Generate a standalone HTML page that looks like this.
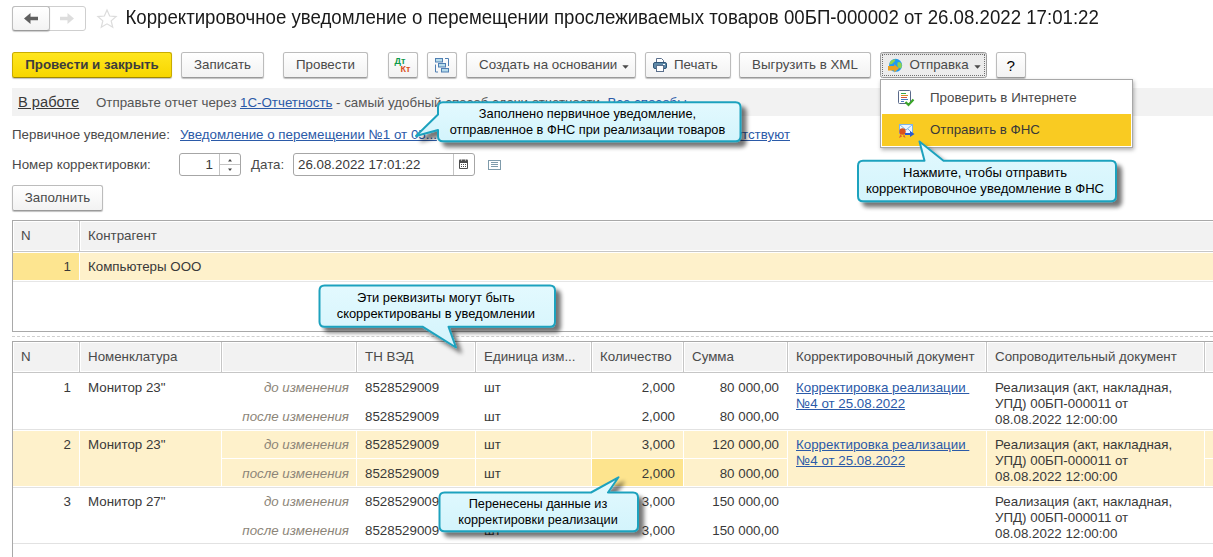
<!DOCTYPE html>
<html lang="ru">
<head>
<meta charset="utf-8">
<title>Корректировочное уведомление</title>
<style>
html,body{margin:0;padding:0;}
body{width:1213px;height:557px;position:relative;overflow:hidden;background:#fff;font-family:"Liberation Sans",Arial,sans-serif;font-size:13.33px;color:#4a4a4a;}
.abs{position:absolute;}
.btn{position:absolute;top:52px;height:24px;box-sizing:content-box;border:1px solid #bcbcbc;border-bottom-color:#9a9a9a;border-radius:2.500px;background:linear-gradient(#ffffff,#f2f2f2);box-shadow:0 1px 1px rgba(0,0,0,.25);text-align:center;line-height:23px;color:#4a4a4a;white-space:nowrap;}
.btn.y{background:linear-gradient(#ffe61e,#f7d600);border-color:#c9ac00;border-bottom-color:#a08800;font-weight:bold;color:#3c3c3c;}
.lnk{color:#2b5aa8;text-decoration:underline;}
.t{position:absolute;white-space:nowrap;line-height:16px;}
.r{text-align:right;}
.it{font-style:italic;color:#8c8578;}
.hl{position:absolute;background:#e0e0e0;height:1px;}
.vl{position:absolute;background:#d4d4d4;width:1px;}
.co{position:absolute;font-size:12.9px;line-height:16.3px;color:#000;text-align:center;white-space:nowrap;}
</style>
</head>
<body>

<!-- title -->
<div class="abs" style="left:12px;top:6px;width:72px;height:23px;border:1px solid #cfcfcf;border-radius:3px;background:#fff;"></div>
<div class="abs" style="left:12px;top:6px;width:36px;height:23px;border:1px solid #bdbdbd;border-bottom-color:#9a9a9a;border-radius:3px;background:linear-gradient(#fff,#f3f3f3);box-shadow:0 1px 1px rgba(0,0,0,.2);"></div>
<svg class="abs" style="left:12px;top:6px" width="74" height="25" viewBox="0 0 74 25">
<path d="M12 12.500L18.500 7L18.500 10.800L26 10.800L26 14.200L18.500 14.200L18.500 18Z" fill="#5f5f5f"/>
<path d="M62 12.500L55.500 7L55.500 10.800L48 10.800L48 14.200L55.500 14.200L55.500 18Z" fill="#dddddd"/>
</svg>
<svg class="abs" style="left:96px;top:7.500px" width="22" height="22" viewBox="0 0 20 20"><path d="M10 1.800L12.400 7.300L18.300 7.800L13.800 11.700L15.200 17.500L10 14.400L4.800 17.500L6.200 11.700L1.700 7.800L7.600 7.300Z" fill="none" stroke="#dcdcdc" stroke-width="1.100"/></svg>
<div class="t" id="title" style="left:125.400px;top:6px;font-size:18.67px;line-height:24px;color:#1a1a1a;transform:scaleY(1.045);transform-origin:0 18px;">Корректировочное уведомление о перемещении прослеживаемых товаров 00БП-000002 от 26.08.2022 17:01:22</div>

<!-- toolbar -->
<div class="btn y" style="left:12px;width:158px;">Провести и закрыть</div>
<div class="btn" style="left:181px;width:81px;">Записать</div>
<div class="btn" style="left:283px;width:83px;">Провести</div>
<div class="btn" style="left:388px;width:27.500px;"></div>
<div class="t" style="left:394.500px;top:56px;font-size:9px;line-height:10px;font-weight:bold;color:#0c9a4a;">Дт</div>
<div class="t" style="left:400.500px;top:63.500px;font-size:9px;line-height:10px;font-weight:bold;color:#d9501e;">Кт</div>
<div class="btn" style="left:427px;width:28px;"></div>
<svg class="abs" style="left:434px;top:57px" width="16" height="16" viewBox="0 0 16 16">
<g fill="#b7dcec" stroke="#4f7fb3" stroke-width="1">
<rect x="1.500" y="1.500" width="7" height="3.500"/><rect x="4.500" y="6.500" width="7" height="3.500"/><rect x="7.500" y="11.500" width="7" height="3.500"/></g>
<path d="M11 1.500H14.500V9M4 15H1.500V7.500" fill="none" stroke="#4f7fb3" stroke-width="1"/>
</svg>
<div class="btn" style="left:466px;width:168px;text-align:left;text-indent:12px;">Создать на основании</div>
<svg class="abs" style="left:621.500px;top:64.500px" width="7" height="4" viewBox="0 0 7 4"><path d="M0.300 0.300H6.700L3.500 3.800Z" fill="#4a4a4a"/></svg>
<div class="btn" style="left:645px;width:84px;text-align:left;text-indent:28px;">Печать</div>
<svg class="abs" style="left:652px;top:57px" width="16" height="16" viewBox="0 0 16 16">
<path d="M4.500 5.500V1.500H9.500L11.500 3.500V5.500" fill="#fff" stroke="#5a6f8c" stroke-width="1"/>
<rect x="1.500" y="5.500" width="13" height="6" rx="1.500" fill="#5f8aa8" stroke="#2f5577" stroke-width="1"/>
<rect x="4.500" y="8.500" width="7" height="6" fill="#fff" stroke="#5a6f8c" stroke-width="1"/>
<rect x="11" y="7" width="2" height="1" fill="#fff"/>
</svg>
<div class="btn" style="left:739px;width:130px;">Выгрузить в XML</div>
<div class="btn" style="left:880px;width:105px;border-color:#9c9c9c;background:linear-gradient(#cfcfcf 0,#ebebeb 2px,#ededed 100%);box-shadow:none;text-align:left;text-indent:28.500px;">Отправка</div>
<div class="abs" style="left:882px;top:54px;width:101px;height:20px;border:1px dotted #707070;"></div>
<svg class="abs" style="left:887px;top:58px" width="17" height="16" viewBox="0 0 17 16">
<circle cx="8.600" cy="7.300" r="6.500" fill="#1f9af2"/>
<path d="M3 4Q5 1 8.500 1.200L7.500 3.500L5 6L2.600 6.500ZM10.500 4.500Q13 3 14.500 5.500Q15.500 8.500 14 10.500L11 9.500Q10 7 10.500 4.500Z" fill="#8ed44c"/>
<path d="M1 8.100H7.300V6.300L12 10.300L7.300 14.600V12.500H1Z" fill="#e9a11f"/>
</svg>
<svg class="abs" style="left:973.500px;top:64.500px" width="7" height="4" viewBox="0 0 7 4"><path d="M0.300 0.300H6.700L3.500 3.800Z" fill="#4a4a4a"/></svg>
<div class="btn" style="left:996px;width:27.500px;"></div>
<div class="t" style="left:996px;width:29.500px;top:54.800px;line-height:22px;text-align:center;color:#000;font-size:15.2px;">?</div>

<!-- info bar -->
<div class="abs" style="left:12px;top:88px;width:1201px;height:28px;background:#f2f2f2;"></div>
<div class="t" style="left:18px;top:93px;font-size:14.67px;line-height:18px;color:#393939;text-decoration:underline;">В работе</div>
<div class="t" style="left:96px;top:95px;color:#555;">Отправьте отчет через</div>
<div class="t lnk" style="left:240px;top:95px;">1С-Отчетность</div>
<div class="t" style="left:336px;top:95px;color:#555;">- самый удобный способ сдачи отчетности. <span class="lnk">Все способы...</span></div>

<div class="t" style="left:12px;top:127px;">Первичное уведомление:</div>
<div class="t lnk" style="left:180px;top:127px;">Уведомление о перемещении №1 от 05...</div>
<div class="t lnk r" style="left:600px;width:190px;top:127px;">Расхождения отсутствуют</div>

<div class="t" style="left:12px;top:157px;">Номер корректировки:</div>
<div class="abs" style="left:179px;top:153px;width:60px;height:21px;border:1px solid #a6a6a6;border-radius:3px;background:#fff;"></div>
<div class="vl" style="left:219px;top:154px;height:21px;background:#c4c4c4;"></div>
<div class="hl" style="left:220px;top:164px;width:20px;background:#c4c4c4;"></div>
<svg class="abs" style="left:226px;top:157px" width="8" height="16" viewBox="0 0 8 16"><path d="M2 4.500H6L4 2ZM2 11.500H6L4 14Z" fill="#444"/></svg>
<div class="t r" style="left:180px;width:33px;top:157px;color:#393939;">1</div>
<div class="t" style="left:251px;top:157px;">Дата:</div>
<div class="abs" style="left:293px;top:153px;width:180px;height:21px;border:1px solid #a6a6a6;border-radius:3px;background:#fff;"></div>
<div class="t" style="left:298px;top:157px;color:#393939;">26.08.2022 17:01:22</div>
<div class="vl" style="left:453px;top:154px;height:21px;background:#c4c4c4;"></div>
<svg class="abs" style="left:458px;top:158px" width="11" height="12" viewBox="0 0 11 12"><rect x="1" y="1.500" width="9" height="9.500" rx="1" fill="#4d4d4d"/><rect x="2" y="5" width="7" height="5" fill="#fff"/><path d="M3 6h1v1h-1zM5 6h1v1h-1zM7 6h1v1h-1zM3 8h1v1h-1zM5 8h1v1h-1zM7 8h1v1h-1z" fill="#4d4d4d"/><rect x="3" y="1.500" width="1" height="1" fill="#fff"/><rect x="7" y="1.500" width="1" height="1" fill="#fff"/></svg>
<svg class="abs" style="left:488px;top:160px" width="13" height="10" viewBox="0 0 13 10"><rect x="0.500" y="0.500" width="12" height="9" fill="#fff" stroke="#7f9bab"/><path d="M3 2.500h7M3 4.500h7M3 6.500h7" stroke="#7f9bab" stroke-width="1"/></svg>

<div class="btn" style="left:12px;top:185px;width:89px;">Заполнить</div>

<!-- table 1 -->
<div class="abs" style="left:12px;top:220px;width:1201px;height:110px;border:1px solid #a9a9a9;border-right:none;"></div>
<div class="abs" style="left:14px;top:222px;width:64px;height:28px;background:#f2f2f2;"></div>
<div class="abs" style="left:81px;top:222px;width:1132px;height:28px;background:#f2f2f2;"></div>
<div class="vl" style="left:79px;top:221px;height:30px;background:#c6c6c6;"></div>
<div class="hl" style="left:13px;top:251px;width:1200px;background:#c6c6c6;"></div>
<div class="t" style="left:21px;top:228px;">N</div>
<div class="t" style="left:88px;top:228px;">Контрагент</div>
<div class="abs" style="left:13px;top:253px;width:66px;height:27px;background:#fde590;"></div>
<div class="abs" style="left:80px;top:253px;width:1133px;height:27px;background:#fef1cb;"></div>
<div class="hl" style="left:13px;top:281px;width:1200px;background:#e6e6e6;"></div>
<div class="t r" style="left:13px;width:58px;top:259px;color:#393939;">1</div>
<div class="t" style="left:88px;top:259px;color:#393939;">Компьютеры ООО</div>

<div class="abs" style="left:12px;top:336px;width:1201px;height:0;border-top:1px dashed #cfcfcf;"></div>

<!-- table 2 -->
<div class="abs" style="left:12px;top:341px;width:1201px;height:230px;border:1px solid #a9a9a9;border-right:none;"></div>

<!--T2S-->
<div class="abs" style="left:14px;top:343px;width:64px;height:28px;background:#f2f2f2;"></div>
<div class="vl" style="left:79px;top:342px;height:30px;background:#c6c6c6;"></div>
<div class="abs" style="left:81px;top:343px;width:139px;height:28px;background:#f2f2f2;"></div>
<div class="vl" style="left:221px;top:342px;height:30px;background:#c6c6c6;"></div>
<div class="abs" style="left:223px;top:343px;width:132px;height:28px;background:#f2f2f2;"></div>
<div class="vl" style="left:356px;top:342px;height:30px;background:#c6c6c6;"></div>
<div class="abs" style="left:358px;top:343px;width:116px;height:28px;background:#f2f2f2;"></div>
<div class="vl" style="left:475px;top:342px;height:30px;background:#c6c6c6;"></div>
<div class="abs" style="left:477px;top:343px;width:113px;height:28px;background:#f2f2f2;"></div>
<div class="vl" style="left:591px;top:342px;height:30px;background:#c6c6c6;"></div>
<div class="abs" style="left:593px;top:343px;width:89px;height:28px;background:#f2f2f2;"></div>
<div class="vl" style="left:683px;top:342px;height:30px;background:#c6c6c6;"></div>
<div class="abs" style="left:685px;top:343px;width:101px;height:28px;background:#f2f2f2;"></div>
<div class="vl" style="left:787px;top:342px;height:30px;background:#c6c6c6;"></div>
<div class="abs" style="left:789px;top:343px;width:196px;height:28px;background:#f2f2f2;"></div>
<div class="vl" style="left:986px;top:342px;height:30px;background:#c6c6c6;"></div>
<div class="abs" style="left:988px;top:343px;width:215px;height:28px;background:#f2f2f2;"></div>
<div class="vl" style="left:1204px;top:342px;height:30px;background:#c6c6c6;"></div>
<div class="abs" style="left:1206px;top:343px;width:23px;height:28px;background:#f2f2f2;"></div>
<div class="hl" style="left:13px;top:372px;width:1200px;background:#c6c6c6;"></div>
<div class="t" style="left:21px;top:349px;">N</div>
<div class="t" style="left:88px;top:349px;">Номенклатура</div>
<div class="t" style="left:365px;top:349px;">ТН ВЭД</div>
<div class="t" style="left:484px;top:349px;">Единица изм...</div>
<div class="t" style="left:600px;top:349px;">Количество</div>
<div class="t" style="left:692px;top:349px;">Сумма</div>
<div class="t" style="left:796px;top:349px;">Корректировочный документ</div>
<div class="t" style="left:995px;top:349px;">Сопроводительный документ</div>
<div class="t r" style="left:13px;width:58px;top:380px;color:#393939;">1</div>
<div class="t" style="left:88px;top:380px;color:#393939;">Монитор 23"</div>
<div class="t r it" style="left:222px;width:127px;top:380px;">до изменения</div>
<div class="t" style="left:365px;top:380px;color:#393939;">8528529009</div>
<div class="t" style="left:484px;top:380px;color:#393939;">шт</div>
<div class="t r" style="left:592px;width:83px;top:380px;color:#393939;">2,000</div>
<div class="t r" style="left:684px;width:95px;top:380px;color:#393939;">80 000,00</div>
<div class="t r it" style="left:222px;width:127px;top:408.5px;">после изменения</div>
<div class="t" style="left:365px;top:408.5px;color:#393939;">8528529009</div>
<div class="t" style="left:484px;top:408.5px;color:#393939;">шт</div>
<div class="t r" style="left:592px;width:83px;top:408.5px;color:#393939;">2,000</div>
<div class="t r" style="left:684px;width:95px;top:408.5px;color:#393939;">80 000,00</div>
<div class="t lnk" style="left:796px;top:380px;">Корректировка реализации&nbsp;<br>№4 от 25.08.2022</div>
<div class="t" style="left:995px;top:380px;color:#393939;">Реализация (акт, накладная,<br>УПД) 00БП-000011 от<br>08.08.2022 12:00:00</div>
<div class="abs" style="left:13px;top:431px;width:1200px;height:55px;background:#fef1cb;"></div>
<div class="vl" style="left:79px;top:431px;height:55px;background:#fff;"></div>
<div class="vl" style="left:221px;top:431px;height:55px;background:#fff;"></div>
<div class="vl" style="left:356px;top:431px;height:55px;background:#fff;"></div>
<div class="vl" style="left:475px;top:431px;height:55px;background:#fff;"></div>
<div class="vl" style="left:591px;top:431px;height:55px;background:#fff;"></div>
<div class="vl" style="left:683px;top:431px;height:55px;background:#fff;"></div>
<div class="vl" style="left:787px;top:431px;height:55px;background:#fff;"></div>
<div class="vl" style="left:986px;top:431px;height:55px;background:#fff;"></div>
<div class="vl" style="left:1204px;top:431px;height:55px;background:#fff;"></div>
<div class="hl" style="left:222px;top:458px;width:565px;background:#fff;"></div>
<div class="hl" style="left:1205px;top:458px;width:8px;background:#fff;"></div>
<div class="abs" style="left:592px;top:459px;width:91px;height:27px;background:#fde48e;"></div>
<div class="t r" style="left:13px;width:58px;top:437px;color:#393939;">2</div>
<div class="t" style="left:88px;top:437px;color:#393939;">Монитор 23"</div>
<div class="t r it" style="left:222px;width:127px;top:437px;">до изменения</div>
<div class="t" style="left:365px;top:437px;color:#393939;">8528529009</div>
<div class="t" style="left:484px;top:437px;color:#393939;">шт</div>
<div class="t r" style="left:592px;width:83px;top:437px;color:#393939;">3,000</div>
<div class="t r" style="left:684px;width:95px;top:437px;color:#393939;">120 000,00</div>
<div class="t r it" style="left:222px;width:127px;top:465.5px;">после изменения</div>
<div class="t" style="left:365px;top:465.5px;color:#393939;">8528529009</div>
<div class="t" style="left:484px;top:465.5px;color:#393939;">шт</div>
<div class="t r" style="left:592px;width:83px;top:465.5px;color:#393939;">2,000</div>
<div class="t r" style="left:684px;width:95px;top:465.5px;color:#393939;">80 000,00</div>
<div class="t lnk" style="left:796px;top:437px;">Корректировка реализации&nbsp;<br>№4 от 25.08.2022</div>
<div class="t" style="left:995px;top:437px;color:#393939;">Реализация (акт, накладная,<br>УПД) 00БП-000011 от<br>08.08.2022 12:00:00</div>
<div class="t r" style="left:13px;width:58px;top:494px;color:#393939;">3</div>
<div class="t" style="left:88px;top:494px;color:#393939;">Монитор 27"</div>
<div class="t r it" style="left:222px;width:127px;top:494px;">до изменения</div>
<div class="t" style="left:365px;top:494px;color:#393939;">8528529009</div>
<div class="t" style="left:484px;top:494px;color:#393939;">шт</div>
<div class="t r" style="left:592px;width:83px;top:494px;color:#393939;">3,000</div>
<div class="t r" style="left:684px;width:95px;top:494px;color:#393939;">150 000,00</div>
<div class="t r it" style="left:222px;width:127px;top:522.5px;">после изменения</div>
<div class="t" style="left:365px;top:522.5px;color:#393939;">8528529009</div>
<div class="t" style="left:484px;top:522.5px;color:#393939;">шт</div>
<div class="t r" style="left:592px;width:83px;top:522.5px;color:#393939;">3,000</div>
<div class="t r" style="left:684px;width:95px;top:522.5px;color:#393939;">150 000,00</div>
<div class="t" style="left:995px;top:494px;color:#393939;">Реализация (акт, накладная,<br>УПД) 00БП-000011 от<br>08.08.2022 12:00:00</div>
<div class="hl" style="left:13px;top:429px;width:1200px;background:#e2e2e2;"></div>
<div class="hl" style="left:13px;top:487px;width:1200px;background:#e2e2e2;"></div>
<div class="hl" style="left:13px;top:543px;width:1200px;background:#e2e2e2;"></div>

<!--T2E-->

<!-- dropdown menu -->
<div class="abs" style="left:880px;top:79px;width:251px;height:67px;border:1px solid #a8a8a8;background:#fff;box-shadow:1px 2px 4px rgba(0,0,0,.3);"></div>
<div class="abs" style="left:882px;top:114px;width:249px;height:32px;background:#f9cb22;"></div>
<div class="t" style="left:930px;top:89.500px;font-size:13.33px;">Проверить в Интернете</div>
<div class="t" style="left:930px;top:122px;font-size:13.33px;color:#393939;">Отправить в ФНС</div>
<svg class="abs" style="left:897px;top:89px" width="18" height="18" viewBox="0 0 18 18">
<rect x="1.500" y="1.500" width="12" height="13" rx="1" fill="#fff" stroke="#5a6a8a"/>
<path d="M4 4.500h5" stroke="#3aa84a"/><path d="M4 6.500h7" stroke="#e08a2a"/><path d="M4 8.500h6" stroke="#d0503a"/><path d="M4 10.500h7" stroke="#4a7ac0"/><path d="M4 12.500h3" stroke="#4a7ac0"/>
<path d="M8.500 13L11.500 16L16.500 10.500" fill="none" stroke="#3aa528" stroke-width="2.200"/>
</svg>
<svg class="abs" style="left:897px;top:121px" width="19" height="18" viewBox="0 0 19 18">
<rect x="2.500" y="3.500" width="13" height="9" fill="#eef6ff" stroke="#7db4ea"/>
<path d="M2.500 3.500L9 9L15.500 3.500M2.500 12.500L7 8M15.500 12.500L11 8" fill="none" stroke="#7db4ea"/>
<path d="M3.500 13L2 17L5 15.500ZM7 13L8.500 17L6 15.500Z" fill="#e0602a"/>
<circle cx="5.500" cy="10.500" r="3.200" fill="#d9531e"/>
<path d="M8 12H13V10L17.500 13L13 16V14H8Z" fill="#2a5bd0"/>
</svg>

<!-- callouts -->
<svg class="abs" style="left:0;top:0;pointer-events:none" width="1213" height="557" viewBox="0 0 1213 557">
<defs>
<linearGradient id="cg" x1="0" y1="0" x2="0" y2="1"><stop offset="0" stop-color="#e3f9fe"/><stop offset="1" stop-color="#d3f4fc"/></linearGradient>
<filter id="sh" x="-10%" y="-20%" width="125%" height="150%"><feGaussianBlur in="SourceAlpha" stdDeviation="2"/><feOffset dx="4.500" dy="4.500"/><feComponentTransfer><feFuncA type="linear" slope="0.540"/></feComponentTransfer><feMerge><feMergeNode/><feMergeNode in="SourceGraphic"/></feMerge></filter>
</defs>
<g fill="url(#cg)" stroke="#1fa2be" stroke-width="2" stroke-linejoin="round" filter="url(#sh)">
<path d="M443 102.3H735.5Q740.5 102.3 740.5 107.3V136.3Q740.5 141.3 735.5 141.3H443Q438 141.3 438 136.3V130L416 136L438 114.5V107.3Q438 102.3 443 102.3Z"/>
<path d="M863 160.7H924.5L919.5 141.5L943.5 160.7H1111Q1116 160.7 1116 165.7V196.2Q1116 201.2 1111 201.2H863Q858 201.2 858 196.2V165.7Q858 160.7 863 160.7Z"/>
<path d="M324.5 285.5H550Q555 285.5 555 290.5V321.7Q555 326.7 550 326.7H448.5L456 347.5L422.5 326.7H324.5Q319.5 326.7 319.5 321.7V290.5Q319.5 285.5 324.5 285.5Z"/>
<path d="M444.5 492.5H591L618.5 477.3L608 492.5H633Q638 492.5 638 497.5V526.2Q638 531.2 633 531.2H444.5Q439.5 531.2 439.5 526.2V497.5Q439.5 492.5 444.5 492.5Z"/>
</g>
</svg>
<div class="co" style="left:435.500px;width:304px;top:105.500px;font-size:12.8px;">Заполнено первичное уведомление,<br>отправленное в ФНС при реализации товаров</div>
<div class="co" style="left:855px;width:260px;top:164.500px;font-size:13.05px;">Нажмите, чтобы отправить<br>корректировочное уведомление в ФНС</div>
<div class="co" style="left:317.300px;width:237px;top:289.500px;">Эти реквизиты могут быть<br>скорректированы в уведомлении</div>
<div class="co" style="left:438px;width:200px;top:495.500px;font-size:12.7px;">Перенесены данные из<br>корректировки реализации</div>

</body>
</html>
